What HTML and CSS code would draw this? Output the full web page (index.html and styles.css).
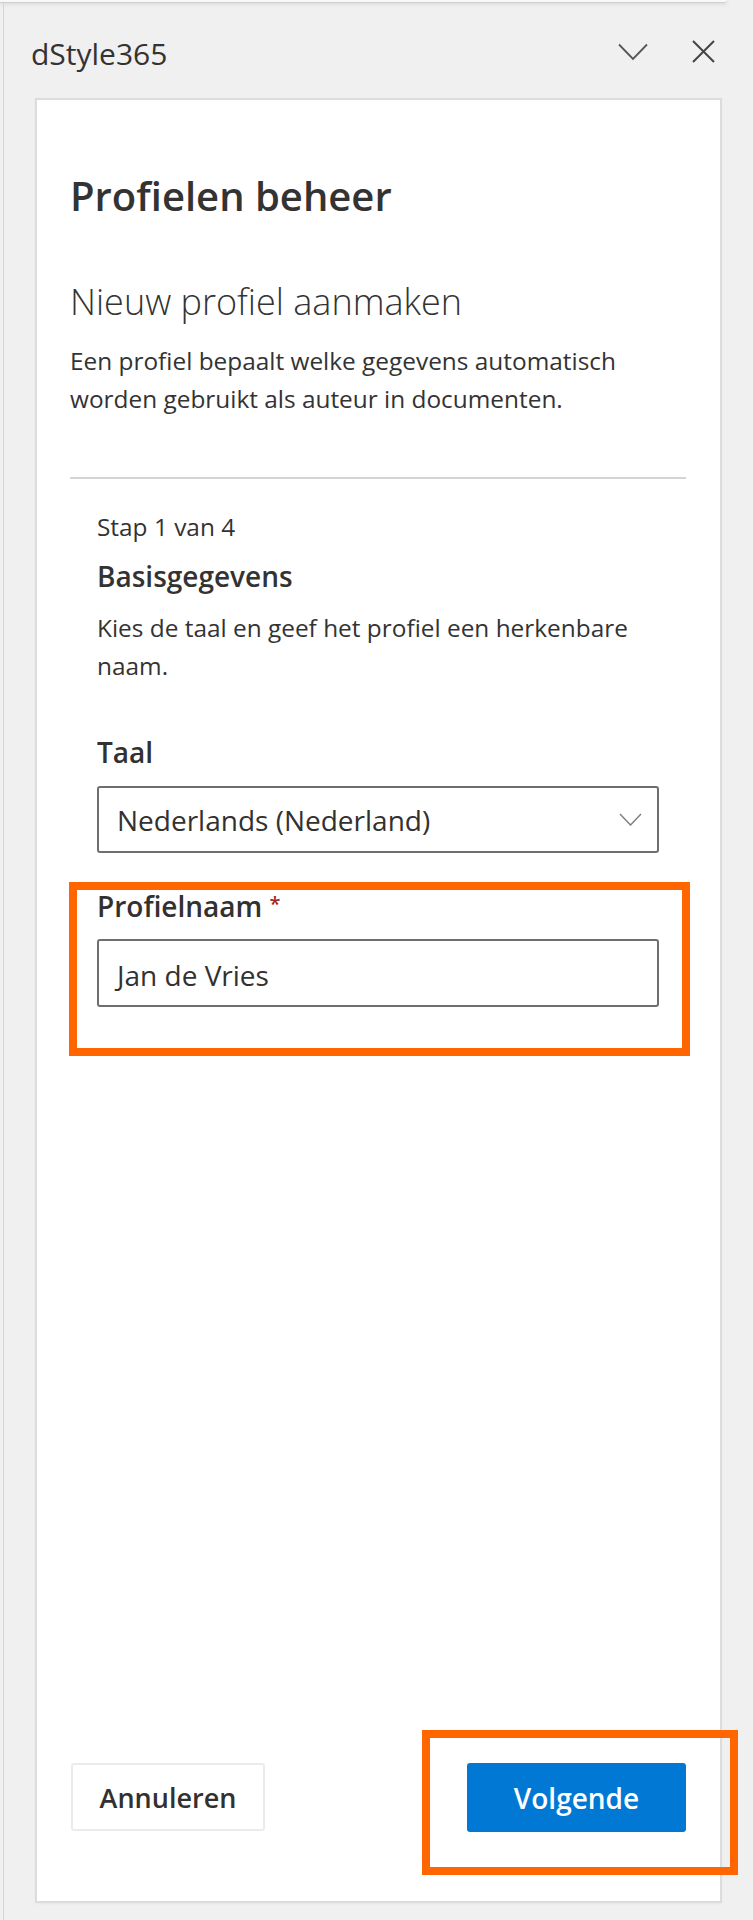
FILE: index.html
```html
<!DOCTYPE html>
<html lang="nl">
<head>
<meta charset="utf-8">
<title>dStyle365</title>
<link rel="stylesheet" href="styles.css">
</head>
<body>
<div class="window">
  <div class="topedge"></div>
  <div class="pane">
    <header class="titlebar">
      <span class="app-title">dStyle365</span>
      <span class="title-actions">
        <svg class="icon-chevron" width="30" height="18" viewBox="0 0 30 18" aria-hidden="true"><polyline points="1,1.5 15,16 29,1.5" fill="none" stroke="#555" stroke-width="1.8"/></svg>
        <svg class="icon-close" width="23" height="23" viewBox="0 0 23 23" aria-hidden="true"><path d="M1 1 L22 22 M22 1 L1 22" fill="none" stroke="#444" stroke-width="2"/></svg>
      </span>
    </header>
    <main class="card">
      <h1 class="page-title">Profielen beheer</h1>
      <h2 class="section-title">Nieuw profiel aanmaken</h2>
      <p class="intro">Een profiel bepaalt welke gegevens automatisch worden gebruikt als auteur in documenten.</p>
      <hr class="divider">
      <section class="step">
        <div class="step-count">Stap 1 van 4</div>
        <div class="step-title">Basisgegevens</div>
        <p class="step-desc">Kies de taal en geef het profiel een herkenbare naam.</p>
        <label class="field-label label-taal">Taal</label>
        <div class="dropdown">
          <span class="dropdown-value">Nederlands (Nederland)</span>
          <svg class="icon-dropdown" width="23" height="13" viewBox="0 0 23 13" aria-hidden="true"><polyline points="1,1 11.5,12 22,1" fill="none" stroke="#808080" stroke-width="1.5"/></svg>
        </div>
        <div class="highlight highlight-field">
          <label class="field-label label-name">Profielnaam <span class="required">*</span></label>
          <div class="textfield">Jan de Vries</div>
        </div>
      </section>
      <footer class="actions">
        <button class="btn btn-secondary" type="button">Annuleren</button>
        <div class="highlight highlight-btn">
          <button class="btn btn-primary" type="button">Volgende</button>
        </div>
      </footer>
    </main>
  </div>
</div>
</body>
</html>
```
FILE: styles.css
```css
html, body {
  margin: 0;
  padding: 0;
}

body {
  background: #f0f0f0;
  font-family: "Open Sans", "Segoe UI", sans-serif;
  color: #323130;
}

.window {
  height: 1920px;
  display: flex;
  flex-direction: column;
}

.topedge {
  height: 2px;
  width: 727px;
  background: #f8f8f8;
  border-bottom: 1px solid #cfcfcf;
  border-bottom-right-radius: 6px;
  box-shadow: 0 1px 4px rgba(0, 0, 0, 0.12);
  flex-shrink: 0;
}

.pane {
  flex: 1;
  margin-left: 3px;
  border-left: 1px solid #d6d6d6;
  display: flex;
  flex-direction: column;
  min-height: 0;
}

.titlebar {
  height: 95px;
  flex-shrink: 0;
  box-sizing: border-box;
  display: flex;
  align-items: center;
  padding: 0 38px 0 27px;
}

.app-title {
  font-size: 30px;
  line-height: 30px;
  margin-top: 6px;
  color: #333;
}

.title-actions {
  margin-left: auto;
  margin-top: 2px;
  display: flex;
  align-items: center;
  gap: 44px;
}

.title-actions svg {
  display: block;
}

.card {
  flex: 1;
  margin: 0 31px 17px 31px;
  border: 2px solid #dcdcdc;
  background: #fff;
  box-shadow: 0 1px 2px rgba(0, 0, 0, 0.04);
  padding: 72px 34px 0 33px;
  display: flex;
  flex-direction: column;
  min-height: 0;
}

.page-title {
  margin: 0;
  font-size: 40px;
  line-height: 48px;
  font-weight: 600;
  color: #333;
}

.section-title {
  margin: 60px 0 0;
  font-size: 36px;
  line-height: 44px;
  font-weight: 350;
  color: #333;
}

.intro {
  margin: 17.5px 0 0;
  font-size: 24.4px;
  line-height: 38px;
  color: #333;
}

.divider {
  margin: 59.5px 0 0;
  border: 0;
  height: 2px;
  background: #d4d4d4;
}

.step {
  padding: 0 27px;
}

.step-count {
  margin-top: 29.5px;
  font-size: 24.4px;
  line-height: 36px;
  color: #333;
}

.step-title {
  margin-top: 13.5px;
  font-size: 28px;
  line-height: 36px;
  font-weight: 600;
  color: #333;
}

.step-desc {
  margin: 14.5px 0 0;
  font-size: 24.4px;
  line-height: 38px;
  color: #333;
}

.field-label {
  display: block;
  font-size: 28px;
  font-weight: 600;
  color: #323130;
}

.label-taal {
  margin-top: 49.5px;
  line-height: 36px;
}

.label-name {
  line-height: 32px;
}

.required {
  color: #a4262c;
  font-size: 20px;
  vertical-align: 6px;
  line-height: 0;
}

.dropdown {
  margin-top: 16px;
  height: 67px;
  box-sizing: border-box;
  border: 2px solid #6e6e6e;
  border-radius: 3px;
  display: flex;
  align-items: center;
  justify-content: space-between;
  padding: 0 15px 0 18px;
  font-size: 28px;
  color: #323130;
}

.icon-dropdown {
  display: block;
}

.highlight {
  border: 8px solid #ff6600;
}

.highlight-field {
  margin: 29px -31px 0 -28px;
  padding: 0 23px 41px 20px;
}

.textfield {
  margin-top: 17px;
  height: 68px;
  box-sizing: border-box;
  border: 2px solid #6e6e6e;
  border-radius: 3px;
  display: flex;
  align-items: center;
  padding: 3px 18px 0 18px;
  font-size: 28px;
  color: #323130;
}

.actions {
  margin-top: auto;
  display: flex;
  justify-content: space-between;
  align-items: flex-start;
  padding-bottom: 26px;
}

.highlight-btn {
  padding: 25px 44px 35px 37px;
  margin-right: -52px;
}

.btn {
  font-family: inherit;
  display: block;
  box-sizing: border-box;
  border-radius: 3px;
  cursor: pointer;
  padding: 0;
  font-weight: 600;
}

.btn-secondary {
  margin-top: 33px;
  margin-left: 1px;
  width: 194px;
  height: 68px;
  background: #fff;
  border: 2px solid #ebebeb;
  color: #323130;
  font-size: 27px;
}

.btn-primary {
  width: 219px;
  height: 69px;
  background: #0078d4;
  border: 0;
  color: #fff;
  font-size: 28px;
}
```
